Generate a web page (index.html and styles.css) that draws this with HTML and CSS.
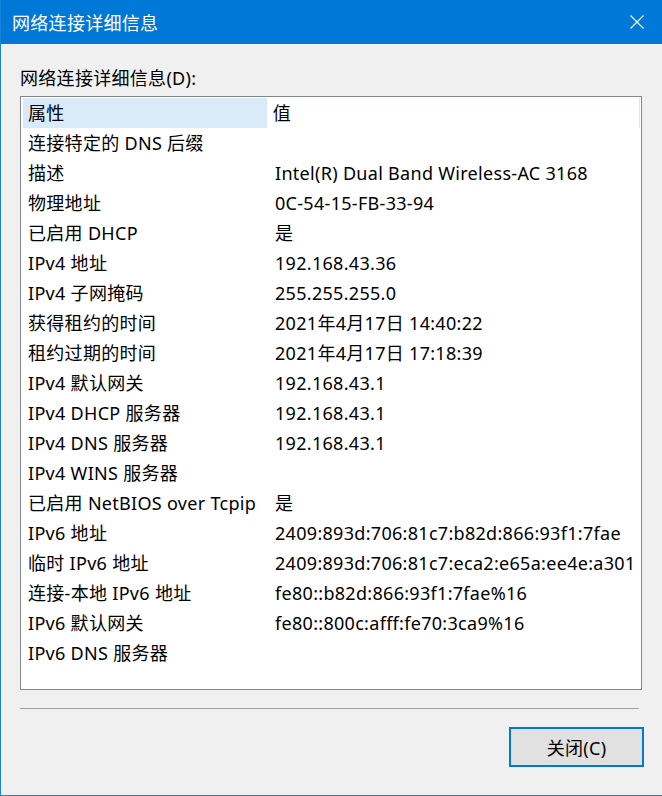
FILE: index.html
```html
<!DOCTYPE html>
<html lang="zh-CN">
<head>
  <meta charset="UTF-8" />
  <title>网络连接详细信息</title>
  <link rel="stylesheet" href="styles.css">
</head>
<body>

  <div class="dialog">
    <div class="titlebar">
      <span class="title">网络连接详细信息</span>
      <svg class="close-icon" width="14" height="14" viewBox="0 0 14 14">
        <path d="M0.5 0.5 L13.5 13.5 M13.5 0.5 L0.5 13.5" stroke="#fff" stroke-width="1.1" fill="none" />
      </svg>
    </div>

    <div class="content">
      <div class="label">网络连接详细信息(D):</div>

      <div class="listbox">
        <div class="list-row list-header">
          <div class="cell prop selected">属性</div>
          <div class="cell value">值</div>
          <div class="cell filler"></div>
        </div>
        <div class="list-row"><div class="cell prop">连接特定的 DNS 后缀</div><div class="cell value"></div></div>
        <div class="list-row"><div class="cell prop">描述</div><div class="cell value">Intel(R) Dual Band Wireless-AC 3168</div></div>
        <div class="list-row"><div class="cell prop">物理地址</div><div class="cell value">0C-54-15-FB-33-94</div></div>
        <div class="list-row"><div class="cell prop">已启用 DHCP</div><div class="cell value">是</div></div>
        <div class="list-row"><div class="cell prop">IPv4 地址</div><div class="cell value">192.168.43.36</div></div>
        <div class="list-row"><div class="cell prop">IPv4 子网掩码</div><div class="cell value">255.255.255.0</div></div>
        <div class="list-row"><div class="cell prop">获得租约的时间</div><div class="cell value">2021年4月17日 14:40:22</div></div>
        <div class="list-row"><div class="cell prop">租约过期的时间</div><div class="cell value">2021年4月17日 17:18:39</div></div>
        <div class="list-row"><div class="cell prop">IPv4 默认网关</div><div class="cell value">192.168.43.1</div></div>
        <div class="list-row"><div class="cell prop">IPv4 DHCP 服务器</div><div class="cell value">192.168.43.1</div></div>
        <div class="list-row"><div class="cell prop">IPv4 DNS 服务器</div><div class="cell value">192.168.43.1</div></div>
        <div class="list-row"><div class="cell prop">IPv4 WINS 服务器</div><div class="cell value"></div></div>
        <div class="list-row"><div class="cell prop">已启用 NetBIOS over Tcpip</div><div class="cell value">是</div></div>
        <div class="list-row"><div class="cell prop">IPv6 地址</div><div class="cell value">2409:893d:706:81c7:b82d:866:93f1:7fae</div></div>
        <div class="list-row"><div class="cell prop">临时 IPv6 地址</div><div class="cell value">2409:893d:706:81c7:eca2:e65a:ee4e:a301</div></div>
        <div class="list-row"><div class="cell prop">连接-本地 IPv6 地址</div><div class="cell value">fe80::b82d:866:93f1:7fae%16</div></div>
        <div class="list-row"><div class="cell prop">IPv6 默认网关</div><div class="cell value">fe80::800c:afff:fe70:3ca9%16</div></div>
        <div class="list-row"><div class="cell prop">IPv6 DNS 服务器</div><div class="cell value"></div></div>
      </div>

      <div class="separator"></div>

      <div class="actions">
        <button class="close-button">关闭(C)</button>
      </div>
    </div>
  </div>

</body>
</html>
```

FILE: styles.css
```css
body {
  margin: 0;
  font-family: "Noto Sans", "Noto Sans CJK SC", sans-serif;
  font-size: 18px;
  letter-spacing: 0.3px;
  color: #000;
}

.dialog {
  width: 662px;
  height: 796px;
  box-sizing: border-box;
  background-color: #f0f0f0;
  border-left: 1px solid #1883d7;
  border-bottom: 1px solid #1883d7;
}

.titlebar {
  height: 44px;
  background-color: #0078d7;
  color: white;
  display: flex;
  align-items: center;
  justify-content: space-between;
  padding: 0 18px 0 11px;
}

.close-icon {
  display: block;
}

.content {
  padding: 0 20px 0 19px;
}

.label {
  margin-top: 22px;
  line-height: 24px;
  height: 24px;
}

.listbox {
  margin-top: 6px;
  height: 594px;
  box-sizing: border-box;
  border: 1px solid #828790;
  background-color: white;
  padding: 1px 1px 0 1px;
}

.list-row {
  display: flex;
  height: 30px;
  line-height: 30px;
}

.cell {
  white-space: nowrap;
}

.prop {
  width: 247px;
  padding-left: 6px;
  box-sizing: border-box;
}

.list-header .prop {
  margin-left: 1px;
  width: 246px;
  padding-left: 5px;
}

.value {
  padding-left: 6px;
}

.list-header .value {
  width: 370px;
}

.list-header .filler {
  width: 0;
  border-right: 1px solid #e5e5e5;
}

.selected {
  background-color: #d9ebf9;
}

.separator {
  margin-top: 18px;
  height: 1px;
  width: 619px;
  background-color: #a0a0a0;
}

.actions {
  display: flex;
  justify-content: flex-end;
  margin-top: 18px;
  margin-right: -2px;
}

.close-button {
  width: 135px;
  height: 40px;
  background-color: #e1e1e1;
  border: 2px solid #0078d7;
  font-family: inherit;
  font-size: 18px;
  letter-spacing: inherit;
  color: #000;
  padding: 0;
}
```
